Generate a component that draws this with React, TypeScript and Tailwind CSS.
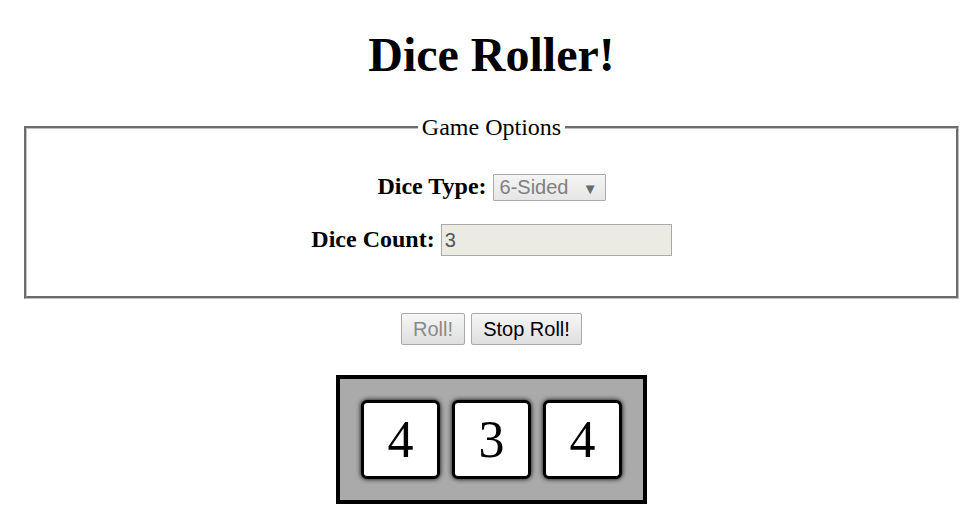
import React from "react";

function Die({ value }: { value: number }) {
  return (
    <div className="flex h-[79px] w-[79px] items-center justify-center rounded-[6px] border-[3px] border-black bg-white text-[52px] leading-none shadow-[0_0_5px_#000]">
      {value}
    </div>
  );
}

export default function App() {
  return (
    <div className="min-h-screen bg-white pl-[9px] font-['Liberation_Serif',serif] text-[24px] text-black">
      <h1 className="pt-[27px] text-center text-[48px] font-bold leading-[55px]">Dice Roller!</h1>

      <fieldset className="mb-[14px] ml-[15px] mr-[15px] mt-[31px] border-[3px] border-[#c0c0c0] px-[12px] pb-[40px] pt-[31px] [border-style:groove]">
        <legend className="mx-auto px-[4px] leading-[28px]">Game Options</legend>

        <div className="flex items-baseline justify-center">
          <span className="font-bold leading-[28px]">Dice Type:</span>
          <span className="w-[6px]" />
          <div className="flex h-[27px] w-[113px] items-baseline rounded-[1px] border border-[#aaaaaa] bg-gradient-to-b from-[#f4f4f4] to-[#e6e6e6] pl-[6px] pr-[7px] font-['Liberation_Sans',sans-serif] text-[20px] leading-[25px] text-[#808080]">
            <span>6-Sided</span>
            <span className="ml-auto text-[15px] text-[#6a6a6a]">▼</span>
          </div>
        </div>

        <div className="mt-[23px] flex items-baseline justify-center">
          <span className="font-bold leading-[28px]">Dice Count:</span>
          <span className="w-[6px]" />
          <div className="h-[32px] w-[231px] border border-[#a9a9a9] bg-[#ebebe4] pl-[3px] font-['Liberation_Sans',sans-serif] text-[20px] leading-[30px] text-[#545454]">
            3
          </div>
        </div>
      </fieldset>

      <div className="flex justify-center gap-[6px] font-['Liberation_Sans',sans-serif] text-[20px]">
        <div className="flex h-[32px] w-[64px] items-center justify-center rounded-[2px] border border-[#a9a9a9] bg-gradient-to-b from-[#f6f6f6] to-[#dfdfdf] text-[#8a8a8a]">
          Roll!
        </div>
        <div className="flex h-[32px] w-[111px] items-center justify-center rounded-[2px] border border-[#a9a9a9] bg-gradient-to-b from-[#f6f6f6] to-[#dfdfdf] text-black">
          Stop Roll!
        </div>
      </div>

      <div className="mt-[30px] flex justify-center">
        <div className="flex gap-[12px] border-4 border-black bg-[#aaaaaa] p-[21px]">
          <Die value={4} />
          <Die value={3} />
          <Die value={4} />
        </div>
      </div>
    </div>
  );
}
